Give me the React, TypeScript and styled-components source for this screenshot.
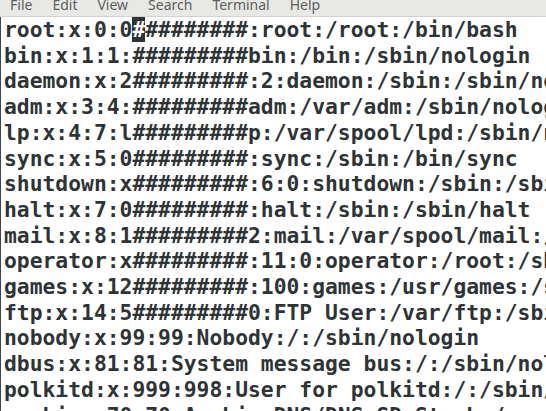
import styled, { createGlobalStyle } from "styled-components"

const GlobalStyle = createGlobalStyle`
    html, body {
        margin: 0;
        padding: 0;
        background: #ffffff;
    }
    body {
        overflow: hidden;
    }
`

const Window = styled.div({
    width: '546px',
    height: '411px',
    overflow: 'hidden',
    display: 'flex',
    flexDirection: 'column',
    background: '#ffffff'
})

const MenuBar = styled.div({
    height: '16px',
    flexShrink: 0,
    display: 'flex',
    alignItems: 'flex-start',
    gap: '20px',
    padding: '0px 10px',
    background: '#e8e8e7',
    borderBottom: '1px solid #d3d3d1',
    overflow: 'hidden'
})

const MenuItem = styled.span({
    fontFamily: '"Noto Sans", "DejaVu Sans", sans-serif',
    fontSize: '14px',
    lineHeight: '19px',
    marginTop: '-5px',
    color: '#5c5e5a',
    whiteSpace: 'nowrap'
})

const Screen = styled.pre({
    flex: 1,
    margin: 0,
    padding: '0px 0px 0px 3px',
    borderLeft: '1px solid #3b4653',
    fontFamily: '"DejaVu Sans Mono", "Liberation Mono", monospace',
    fontWeight: 700,
    fontSize: '21.33px',
    lineHeight: '25.7px',
    color: '#2e3436',
    whiteSpace: 'pre',
    overflow: 'hidden'
})

const Cursor = styled.span({
    background: '#2e3436',
    color: '#ffffff'
})

const menus = ['File', 'Edit', 'View', 'Search', 'Terminal', 'Help']

const HASH = '#########'

const lines = [
    `bin:x:1:1:${HASH}bin:/bin:/sbin/nologin`,
    `daemon:x:2${HASH}:2:daemon:/sbin:/sbin/nologin`,
    `adm:x:3:4:${HASH}adm:/var/adm:/sbin/nologin`,
    `lp:x:4:7:l${HASH}p:/var/spool/lpd:/sbin/nologin`,
    `sync:x:5:0${HASH}:sync:/sbin:/bin/sync`,
    `shutdown:x${HASH}:6:0:shutdown:/sbin:/sbin/shutdown`,
    `halt:x:7:0${HASH}:halt:/sbin:/sbin/halt`,
    `mail:x:8:1${HASH}2:mail:/var/spool/mail:/sbin/nologin`,
    `operator:x${HASH}:11:0:operator:/root:/sbin/nologin`,
    `games:x:12${HASH}:100:games:/usr/games:/sbin/nologin`,
    `ftp:x:14:5${HASH}0:FTP User:/var/ftp:/sbin/nologin`,
    'nobody:x:99:99:Nobody:/:/sbin/nologin',
    'dbus:x:81:81:System message bus:/:/sbin/nologin',
    'polkitd:x:999:998:User for polkitd:/:/sbin/nologin',
    'avahi:x:70:70:Avahi mDNS/DNS-SD Stack:/var/run/avahi-daemon:/sbin/nologin'
]

export default function App() {
    return (
        <>
            <GlobalStyle />
            <Window>
                <MenuBar>
                    {menus.map((m) => <MenuItem key={m}>{m}</MenuItem>)}
                </MenuBar>
                <Screen>
                    root:x:0:0<Cursor>#</Cursor>########:root:/root:/bin/bash{'\n'}
                    {lines.join('\n')}
                </Screen>
            </Window>
        </>
    )
}
